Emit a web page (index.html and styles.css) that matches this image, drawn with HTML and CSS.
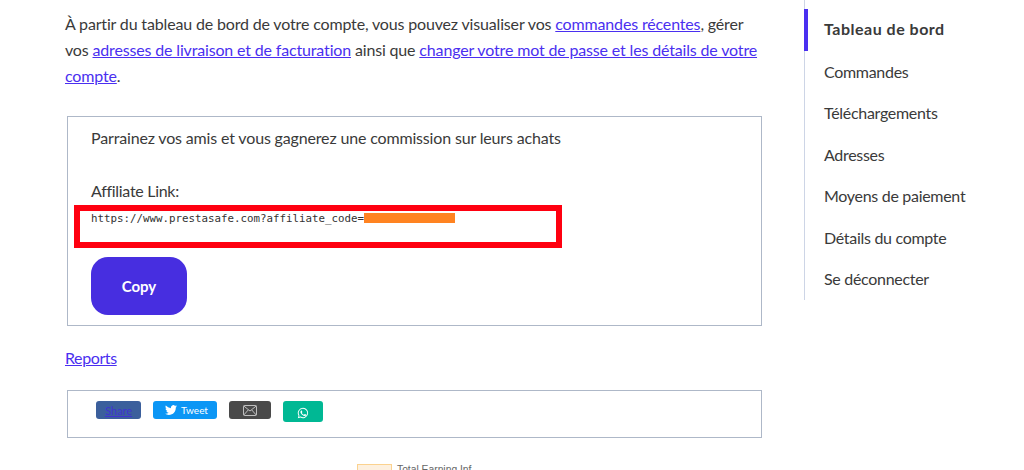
FILE: index.html
```html
<!DOCTYPE html>
<html lang="fr">
<head>
  <meta charset="UTF-8">
  <meta name="viewport" content="width=device-width, initial-scale=1.0">
  <title>Mon compte</title>
  <link rel="stylesheet" href="styles.css">
</head>
<body>
  <div class="page">
    <main class="content">
      <p class="intro">À partir du tableau de bord de votre compte, vous pouvez visualiser vos <a href="#">commandes récentes</a>, gérer vos <a href="#">adresses de livraison et de facturation</a> ainsi que <a href="#">changer votre mot de passe et les détails de votre compte</a>.</p>

      <div class="box affiliate">
        <p class="pitch">Parrainez vos amis et vous gagnerez une commission sur leurs achats</p>
        <p class="link-label">Affiliate Link:</p>
        <div class="link-row">
          <code class="link-url">https://www.prestasafe.com?affiliate_code=</code><span class="redacted"></span>
          <span class="highlight"></span>
        </div>
        <button class="copy-btn">Copy</button>
      </div>

      <p class="reports"><a href="#">Reports</a></p>

      <div class="box share">
        <span class="share-btn share-fb"><a href="#">Share</a></span>
        <span class="share-btn share-tw">
          <svg class="tw-icon" viewBox="0 0 24 24"><path fill="#fff" d="M23.95 4.57a10 10 0 0 1-2.82.77 4.96 4.96 0 0 0 2.16-2.72 9.9 9.9 0 0 1-3.12 1.19 4.92 4.92 0 0 0-8.38 4.48A13.98 13.98 0 0 1 1.64 3.16a4.82 4.82 0 0 0-.67 2.48c0 1.71.87 3.21 2.19 4.1a4.9 4.9 0 0 1-2.23-.62v.06a4.92 4.92 0 0 0 3.95 4.83 5 5 0 0 1-2.21.08 4.94 4.94 0 0 0 4.6 3.42A9.87 9.87 0 0 1 0 19.54a14 14 0 0 0 7.56 2.21c9.05 0 14-7.5 14-13.98 0-.21 0-.42-.02-.63a9.94 9.94 0 0 0 2.41-2.57z"/></svg>
          Tweet
        </span>
        <span class="share-btn share-mail">
          <svg class="mail-icon" viewBox="0 0 14 11"><g fill="none" stroke="#ddd" stroke-width="0.8"><rect x="0.5" y="0.5" width="13" height="10" rx="1"/><path d="M0.8 1l6.2 5 6.2-5M0.8 10l4.4-5M13.2 10L8.8 5"/></g></svg>
        </span>
        <span class="share-btn share-wa">
          <svg class="wa-icon" viewBox="0 0 24 24"><path fill="#fff" d="M12 1.5A10.4 10.4 0 0 0 3.1 17.3L1.6 22.6l5.5-1.4A10.4 10.4 0 1 0 12 1.5zm0 2a8.4 8.4 0 1 1-4.5 15.5l-.4-.2-3 .8.8-3-.2-.4A8.4 8.4 0 0 1 12 3.5z"/><path fill="#fff" d="M9 7c-.3 0-.7.1-1 .5-.4.4-1.200 1.200-1.200 2.600s1 2.900 1.200 3.100c.2.200 2 3.100 4.900 4.200 2.400.900 2.900.700 3.400.700.500-.100 1.700-.700 1.900-1.400.2-.700.2-1.300.200-1.400l-.5-.3-2-1c-.3-.1-.5-.1-.7.2l-.9 1.100c-.2.200-.3.200-.6.100-.3-.2-1.200-.5-2.300-1.400-.9-.8-1.400-1.700-1.600-2-.2-.3 0-.4.100-.6l.4-.5.3-.5c.1-.2 0-.3 0-.5L9.800 7.400C9.600 7 9.300 7 9 7z"/></svg>
        </span>
      </div>

      <div class="earning">
        <span class="earning-swatch"></span>
        <span class="earning-label">Total Earning Inf</span>
      </div>
    </main>

    <nav class="side-nav">
      <a class="nav-item active" href="#">Tableau de bord</a>
      <a class="nav-item" href="#">Commandes</a>
      <a class="nav-item" href="#">Téléchargements</a>
      <a class="nav-item" href="#">Adresses</a>
      <a class="nav-item" href="#">Moyens de paiement</a>
      <a class="nav-item" href="#">Détails du compte</a>
      <a class="nav-item" href="#">Se déconnecter</a>
    </nav>
  </div>
</body>
</html>
```

FILE: styles.css
```css
* {
  box-sizing: border-box;
}
html, body {
  margin: 0;
  height: 470px;
  overflow: hidden;
  background: #fff;
}
body {
  font-family: 'Lato', 'Liberation Sans', sans-serif;
  font-size: 16px;
  letter-spacing: -0.16px;
  color: #3a3a3a;
}
a {
  color: #4a2ff0;
}
p {
  margin: 0;
}
.page {
  display: flex;
  align-items: flex-start;
  padding-left: 65px;
}
.content {
  width: 698px;
  flex: none;
  padding-top: 11px;
}
.intro {
  line-height: 26px;
}
.box {
  margin-left: 2px;
  margin-right: 1px;
  border: 1px solid #aeb8c8;
}
.affiliate {
  height: 210px;
  margin-top: 27px;
  padding: 8px 23px 0;
}
.pitch {
  line-height: 26px;
}
.link-label {
  margin-top: 27px;
  line-height: 26px;
  letter-spacing: -0.3px;
}
.link-row {
  position: relative;
  display: flex;
  align-items: center;
  height: 16px;
  margin-top: 6px;
  letter-spacing: 0;
}
.link-url {
  font-family: 'DejaVu Sans Mono', monospace;
  font-size: 10.8px;
  color: #333;
}
.redacted {
  width: 91px;
  height: 10px;
  background: #ff8321;
}
.highlight {
  position: absolute;
  left: -17px;
  top: -5px;
  width: 488px;
  height: 43px;
  border: 6px solid #ff0010;
}
.copy-btn {
  display: block;
  width: 96px;
  height: 58px;
  margin-top: 31px;
  border: none;
  border-radius: 17px;
  background: #472ee0;
  color: #fff;
  font-family: inherit;
  font-size: 15px;
  font-weight: 700;
}
.reports {
  margin-top: 19px;
  line-height: 26px;
  letter-spacing: -0.4px;
}
.share {
  display: flex;
  align-items: flex-start;
  gap: 12px;
  height: 48px;
  margin-top: 19px;
  padding: 10px 0 0 28px;
}
.share-btn {
  display: flex;
  align-items: center;
  justify-content: center;
  height: 18px;
  border-radius: 3px;
  font-size: 10px;
  letter-spacing: 0;
  color: #fff;
}
.share-fb {
  width: 45px;
  background: #3b5f9c;
  font-size: 11px;
}
.share-fb a {
  color: #3f33d0;
}
.share-tw {
  width: 64px;
  gap: 4px;
  padding-left: 3px;
  background: #0c96f5;
}
.tw-icon {
  width: 12px;
  height: 12px;
}
.share-mail {
  width: 42px;
  background: #4a4a4a;
}
.mail-icon {
  width: 14px;
  height: 11px;
}
.share-wa {
  width: 40px;
  height: 21px;
  background: #00b894;
}
.wa-icon {
  width: 12px;
  height: 12px;
  margin-top: 2px;
}
.earning {
  display: flex;
  gap: 5px;
  margin: 26px 0 0 292px;
}
.earning-swatch {
  width: 35px;
  height: 20px;
  background: #fdf0df;
  border: 1px solid #fbd28f;
}
.earning-label {
  font-family: 'Liberation Sans', sans-serif;
  font-size: 10.3px;
  letter-spacing: 0;
  line-height: 11px;
  color: #666;
}
.side-nav {
  display: flex;
  flex-direction: column;
  width: 220px;
  margin: 0 0 0 41px;
  padding-top: 9px;
  height: 300px;
  border-left: 1px solid #cdd5e6;
}
.nav-item {
  height: 41.7px;
  padding-left: 19px;
  line-height: 41px;
  letter-spacing: -0.3px;
  color: #3a3a3a;
  text-decoration: none;
}
.nav-item.active {
  margin-left: -1px;
  padding-left: 16px;
  border-left: 4px solid #4a2ff0;
  line-height: 40px;
  font-weight: 700;
  letter-spacing: 0.5px;
}
```
